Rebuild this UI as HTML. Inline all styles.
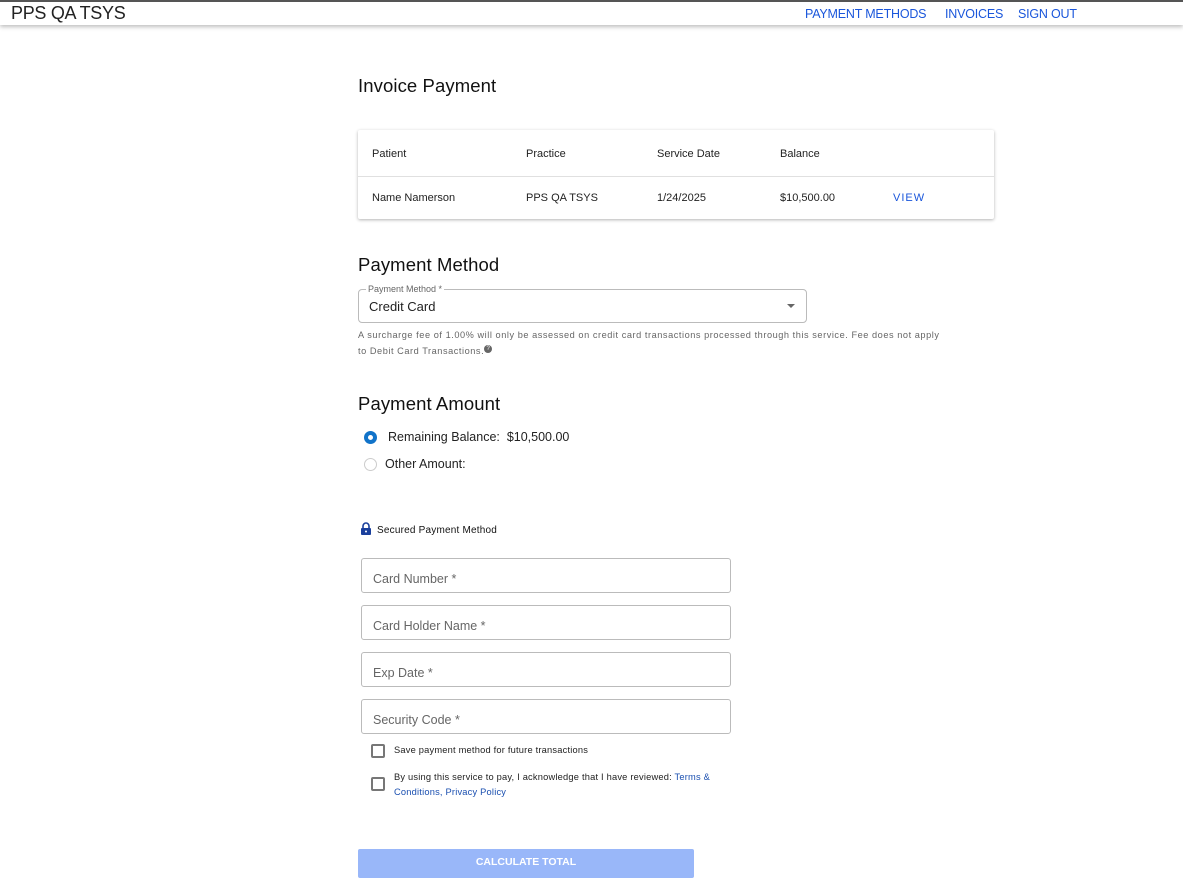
<!DOCTYPE html>
<html><head><meta charset="utf-8"><style>
*{box-sizing:border-box;margin:0;padding:0}
body{width:1183px;height:896px;background:#fff;font-family:"Liberation Sans",Arial,sans-serif;color:#000;position:relative;overflow:hidden}
.a{position:absolute;white-space:nowrap}
.hdr{position:absolute;left:0;top:0;width:1183px;height:25px;border-top:2px solid #555;background:#fff;box-shadow:0 2px 4px rgba(0,0,0,.25)}
.nav{color:#1a56db;font-size:12.5px;letter-spacing:-.2px}
.card{position:absolute;left:358px;top:130px;width:636px;height:89px;box-shadow:0 1px 3px rgba(0,0,0,.3);border-radius:2px}
.t{font-size:11px;color:#222}
.inp{position:absolute;left:361px;width:370px;height:35px;border:1px solid #bbb;border-radius:3px}
.inp span{position:absolute;left:11px;top:13px;font-size:12.5px;color:#666}
.cb{position:absolute;left:371px;width:14px;height:14px;border:2px solid #777;border-radius:2px}
h{position:absolute;font-size:18.5px;color:#111;white-space:nowrap;letter-spacing:.1px}
</style></head><body>
<div class="hdr"></div>
<div class="a" style="left:11px;top:3px;font-size:18px;color:#222;letter-spacing:-.3px">PPS QA TSYS</div>
<div class="a nav" style="left:805px;top:7px">PAYMENT METHODS</div>
<div class="a nav" style="left:945px;top:7px">INVOICES</div>
<div class="a nav" style="left:1018px;top:7px">SIGN OUT</div>

<h style="left:358px;top:75px">Invoice Payment</h>
<div class="card">
<div style="position:absolute;left:0;right:0;top:46px;border-top:1px solid #e0e0e0"></div>
</div>
<div class="a t" style="left:372px;top:148px">Patient</div>
<div class="a t" style="left:526px;top:148px">Practice</div>
<div class="a t" style="left:657px;top:148px">Service Date</div>
<div class="a t" style="left:780px;top:148px">Balance</div>
<div class="a t" style="left:372px;top:192px">Name Namerson</div>
<div class="a t" style="left:526px;top:192px">PPS QA TSYS</div>
<div class="a t" style="left:657px;top:192px">1/24/2025</div>
<div class="a t" style="left:780px;top:192px">$10,500.00</div>
<div class="a" style="left:893px;top:192px;font-size:11px;color:#1a56db;letter-spacing:1px">VIEW</div>

<h style="left:358px;top:254px">Payment Method</h>
<div style="position:absolute;left:358px;top:289px;width:449px;height:34px;border:1px solid #bbb;border-radius:4px"></div>
<div class="a" style="left:366px;top:284px;font-size:9px;color:#666;background:#fff;padding:0 2px">Payment Method *</div>
<div class="a" style="left:369px;top:299px;font-size:13px;color:#222">Credit Card</div>
<div class="a" style="left:787px;top:304px;width:0;height:0;border-left:4px solid transparent;border-right:4px solid transparent;border-top:4px solid #666"></div>
<div class="a" style="left:358px;top:327px;font-size:9.2px;color:#666;line-height:16px;letter-spacing:.55px">A surcharge fee of 1.00% will only be assessed on credit card transactions processed through this service. Fee does not apply<br>to Debit Card Transactions.<span style="display:inline-block;width:8px;height:8px;border-radius:50%;background:#666;color:#fff;font-size:6px;text-align:center;line-height:8px;vertical-align:top;margin-top:2px;letter-spacing:0">?</span></div>

<h style="left:358px;top:393px">Payment Amount</h>
<div class="a" style="left:364px;top:431px;width:13px;height:13px;border-radius:50%;border:4px solid #1173c9;background:#fff"></div>
<div class="a" style="left:388px;top:430px;font-size:12.5px;color:#222">Remaining Balance:&nbsp; $10,500.00</div>
<div class="a" style="left:364px;top:458px;width:13px;height:13px;border-radius:50%;border:1px solid #ccc"></div>
<div class="a" style="left:385px;top:457px;font-size:12.5px;color:#222">Other Amount:</div>

<svg class="a" style="left:360px;top:522px" width="12" height="13" viewBox="0 0 12 13"><path d="M3 6V4a3 3 0 0 1 6 0v2" fill="none" stroke="#1a3f9c" stroke-width="1.6"/><rect x="1" y="6" width="10" height="7" rx="1" fill="#1a3f9c"/><circle cx="6" cy="9.5" r="1" fill="#fff"/></svg>
<div class="a" style="left:377px;top:525px;font-size:10px;color:#111;letter-spacing:.2px">Secured Payment Method</div>

<div class="inp" style="top:558px"><span>Card Number *</span></div>
<div class="inp" style="top:605px"><span>Card Holder Name *</span></div>
<div class="inp" style="top:652px"><span>Exp Date *</span></div>
<div class="inp" style="top:699px"><span>Security Code *</span></div>

<div class="cb" style="top:744px"></div>
<div class="a" style="left:394px;top:745px;font-size:9.3px;color:#222;letter-spacing:.2px">Save payment method for future transactions</div>
<div class="cb" style="top:777px"></div>
<div class="a" style="left:394px;top:770px;font-size:9.3px;color:#222;line-height:15px;letter-spacing:.2px">By using this service to pay, I acknowledge that I have reviewed: <span style="color:#1a4fb0">Terms &amp;</span><br><span style="color:#1a4fb0">Conditions, Privacy Policy</span></div>

<div class="a" style="left:358px;top:849px;width:336px;height:29px;background:#99b7f9;border-radius:2px;color:#fff;font-size:10.5px;font-weight:bold;text-align:center;line-height:27px">CALCULATE TOTAL</div>
</body></html>
